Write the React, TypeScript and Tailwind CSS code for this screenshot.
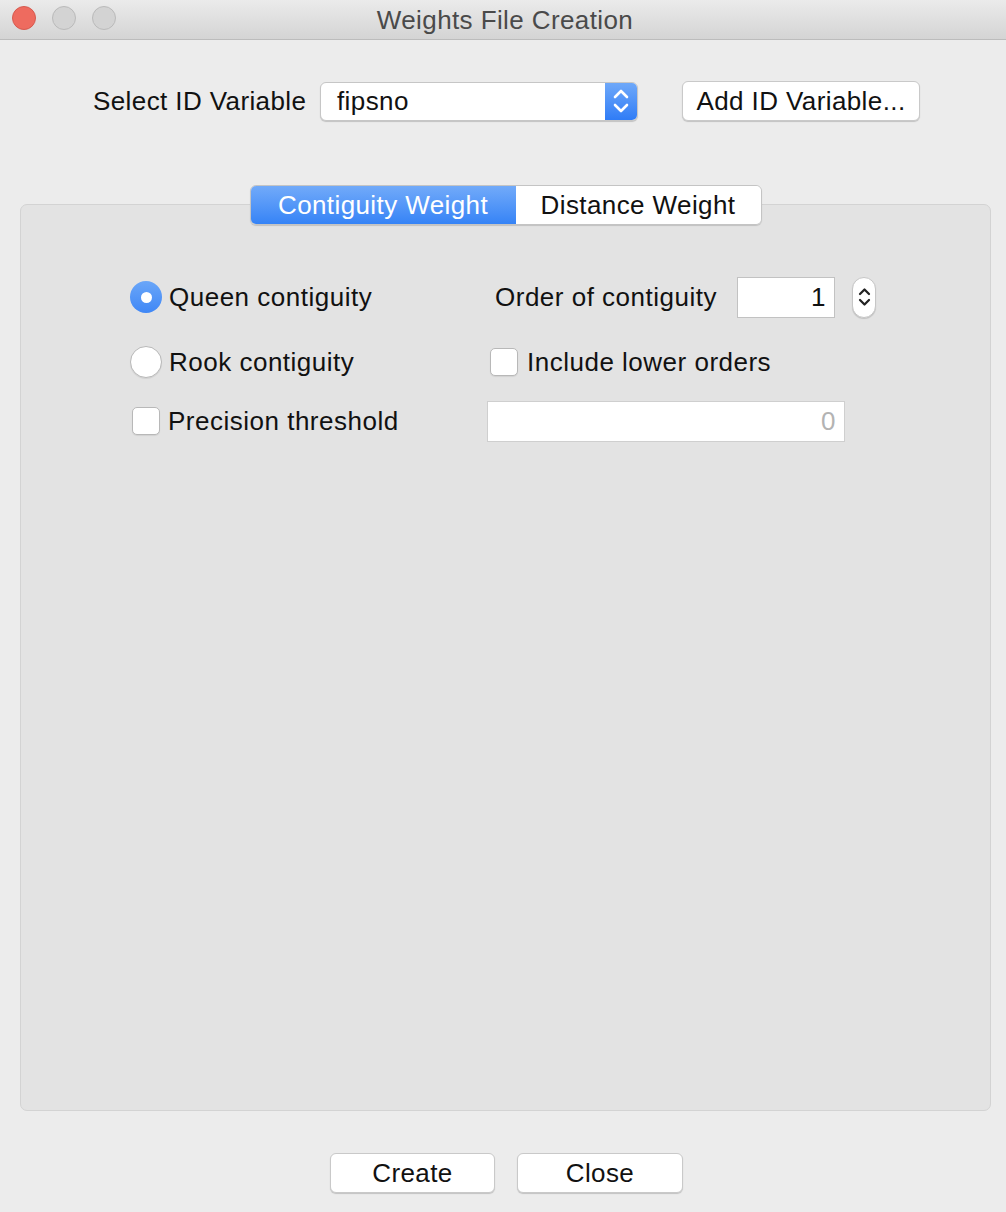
import React from "react";

const font = { fontFamily: '"Liberation Sans", Arial, sans-serif' };

const Chevrons = ({ color, size, weight }: { color: string; size: number; weight: number }) => (
  <svg width={size} height={size * 1.6} viewBox="0 0 10 16" fill="none">
    <path d="M2 6 L5 3 L8 6" stroke={color} strokeWidth={weight} strokeLinecap="round" strokeLinejoin="round" />
    <path d="M2 10 L5 13 L8 10" stroke={color} strokeWidth={weight} strokeLinecap="round" strokeLinejoin="round" />
  </svg>
);

const Checkbox = ({ className = "" }: { className?: string }) => (
  <div
    className={`w-[28px] h-[28px] rounded-[5px] bg-white border border-[#b8b8b8] shadow-[0_1px_1px_rgba(0,0,0,0.08)] ${className}`}
  />
);

const PushButton = ({ label, className = "" }: { label: string; className?: string }) => (
  <button
    className={`h-[40px] rounded-[6px] bg-white border border-[#c9c9c9] shadow-[0_1px_1px_rgba(0,0,0,0.18)] text-[26px] tracking-[0.4px] text-[#111] flex items-center justify-center ${className}`}
  >
    {label}
  </button>
);

export default function App() {
  return (
    <div className="w-[1006px] h-[1212px] bg-[#ececec] flex flex-col overflow-hidden" style={font}>
      {/* title bar */}
      <div className="relative h-[40px] shrink-0 bg-gradient-to-b from-[#ebebeb] to-[#d4d4d4] border-b border-[#bcbcbc] flex items-center justify-center">
        <div className="absolute left-[12px] top-[6px] flex gap-[16px]">
          <div className="w-[24px] h-[24px] rounded-full bg-[#ee6b5f] border border-[#d65a4f]" />
          <div className="w-[24px] h-[24px] rounded-full bg-[#d3d3d3] border border-[#bababa]" />
          <div className="w-[24px] h-[24px] rounded-full bg-[#d3d3d3] border border-[#bababa]" />
        </div>
        <span className="text-[26px] tracking-[0.4px] text-[#4a4a4a] leading-none pl-[4px]">Weights File Creation</span>
      </div>

      {/* ID variable row */}
      <div className="flex items-center mt-[41px] pl-[93px] h-[40px] tracking-[0.4px]">
        <span className="w-[227px] text-[26px] text-[#111]">Select ID Variable</span>
        <div className="w-[318px] h-[39px] flex rounded-[6px] bg-white border border-[#c6c6c6] shadow-[0_1px_1px_rgba(0,0,0,0.18)] overflow-hidden">
          <div className="flex-1 flex items-center pl-[16px] text-[26px] text-[#111]">fipsno</div>
          <div className="w-[32px] bg-gradient-to-b from-[#6ea8f9] to-[#2f7cf6] flex items-center justify-center">
            <Chevrons color="#ffffff" size={20} weight={1.3} />
          </div>
        </div>
        <PushButton label="Add ID Variable..." className="ml-[44px] w-[238px]" />
      </div>

      {/* tabs + panel */}
      <div className="mt-[64px] flex flex-col">
        <div className="relative z-10 flex justify-center pl-[5px]">
          <div className="flex h-[40px] rounded-[6px] border border-[#c4c4c4] shadow-[0_1px_1px_rgba(0,0,0,0.15)] overflow-hidden tracking-[0.4px]">
            <div className="w-[265px] bg-gradient-to-b from-[#71aaf9] to-[#3583f6] text-white text-[26px] flex items-center justify-center">
              Contiguity Weight
            </div>
            <div className="w-[245px] bg-white text-[#111] text-[26px] flex items-center justify-center">
              Distance Weight
            </div>
          </div>
        </div>

        <div className="-mt-[21px] ml-[20px] w-[971px] h-[907px] rounded-[7px] bg-[#e3e3e3] border border-[#d3d3d3]">
          <div className="pt-[71px] pl-[109px] text-[26px] tracking-[0.5px] text-[#111] flex flex-col">
            {/* row 1 */}
            <div className="flex items-center h-[42px]">
              <div className="w-[357px] flex items-center">
                <div className="w-[32px] h-[32px] rounded-full bg-gradient-to-b from-[#6aa6f8] to-[#3f87f6] flex items-center justify-center">
                  <div className="w-[11px] h-[11px] rounded-full bg-white" />
                </div>
                <span className="ml-[7px]">Queen contiguity</span>
              </div>
              <span className="ml-[8px] w-[242px]">Order of contiguity</span>
              <div className="w-[98px] h-[41px] bg-white border border-[#c2c2c2] flex items-center justify-end pr-[8px]">
                1
              </div>
              <div className="ml-[17px] w-[24px] h-[41px] rounded-full bg-white border border-[#c6c6c6] shadow-[0_1px_1px_rgba(0,0,0,0.15)] flex items-center justify-center">
                <Chevrons color="#222222" size={15} weight={1.5} />
              </div>
            </div>

            {/* row 2 */}
            <div className="flex items-center h-[40px] mt-[24px]">
              <div className="w-[357px] flex items-center">
                <div className="w-[32px] h-[32px] rounded-full bg-white border border-[#b8b8b8] shadow-[0_1px_1px_rgba(0,0,0,0.08)]" />
                <span className="ml-[7px]">Rook contiguity</span>
              </div>
              <Checkbox className="ml-[3px]" />
              <span className="ml-[9px]">Include lower orders</span>
            </div>

            {/* row 3 */}
            <div className="flex items-center h-[42px] mt-[18px]">
              <div className="w-[357px] flex items-center">
                <Checkbox className="ml-[2px]" />
                <span className="ml-[8px]">Precision threshold</span>
              </div>
              <div className="w-[358px] h-[41px] bg-white border border-[#cfcfcf] flex items-center justify-end pr-[8px] text-[#b3b3b3]">
                0
              </div>
            </div>
          </div>
        </div>
      </div>

      {/* bottom buttons */}
      <div className="mt-[42px] flex justify-center gap-[22px] pl-[7px]">
        <PushButton label="Create" className="w-[165px] h-[39px]" />
        <PushButton label="Close" className="w-[166px] h-[39px]" />
      </div>
    </div>
  );
}
